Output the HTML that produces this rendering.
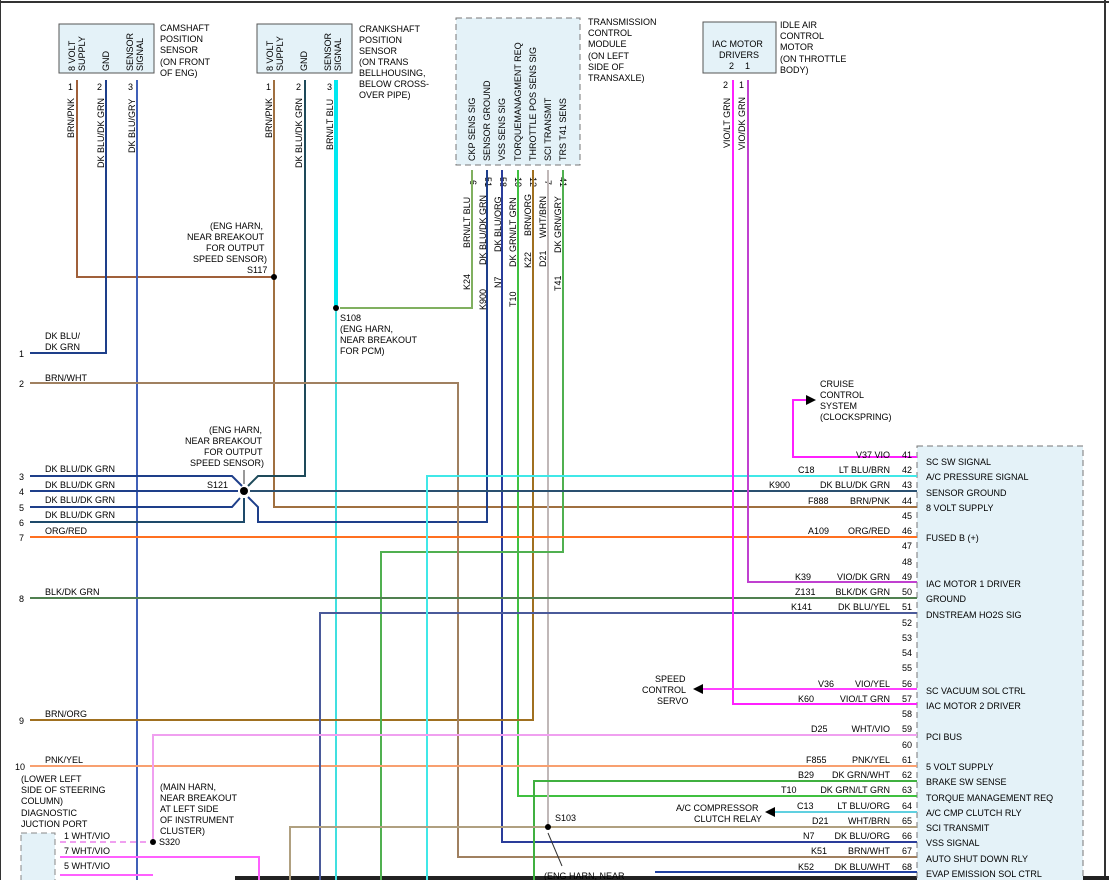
<!DOCTYPE html>
<html><head><meta charset="utf-8"><style>
html,body{margin:0;padding:0;background:#fff;}
svg{display:block;font-family:"Liberation Sans",Arial,sans-serif;font-size:9px;}
</style></head><body>
<svg width="1109" height="880" viewBox="0 0 1109 880" xmlns="http://www.w3.org/2000/svg">
<rect x="0" y="0" width="1109" height="880" fill="#fff"/>
<line x1="0" y1="2" x2="1109" y2="2" stroke="#333" stroke-width="2"/>
<line x1="0.5" y1="0" x2="0.5" y2="880" stroke="#333" stroke-width="1"/>
<line x1="1105" y1="0" x2="1105" y2="880" stroke="#333" stroke-width="2"/>
<rect x="235" y="876" width="874" height="4" fill="#222"/>

<!-- boxes -->
<rect x="59" y="24" width="95" height="49" fill="#e4f2f8" stroke="#555"/>
<rect x="257" y="24" width="95" height="49" fill="#e4f2f8" stroke="#555"/>
<rect x="456" y="18" width="124" height="147" fill="#e4f2f8" stroke="#777" stroke-dasharray="6,4"/>
<rect x="703" y="22" width="73" height="51" fill="#e4f2f8" stroke="#555"/>
<rect x="917" y="446" width="166" height="440" fill="#e4f2f8" stroke="#777" stroke-dasharray="6,4"/>
<rect x="21" y="833" width="34" height="50" fill="#e4f2f8" stroke="#888" stroke-dasharray="6,4"/>

<g fill="#000">
<g transform="translate(75,71) rotate(-90)"><text>8 VOLT</text><text y="10">SUPPLY</text></g>
<g transform="translate(109,71) rotate(-90)"><text>GND</text></g>
<g transform="translate(133,71) rotate(-90)"><text>SENSOR</text><text y="10">SIGNAL</text></g>
<g transform="translate(273,71) rotate(-90)"><text>8 VOLT</text><text y="10">SUPPLY</text></g>
<g transform="translate(307,71) rotate(-90)"><text>GND</text></g>
<g transform="translate(331,71) rotate(-90)"><text>SENSOR</text><text y="10">SIGNAL</text></g>
<g font-size="9">
<text transform="translate(475,161) rotate(-90)">CKP SENS SIG</text>
<text transform="translate(490,161) rotate(-90)">SENSOR GROUND</text>
<text transform="translate(505,161) rotate(-90)">VSS SENS SIG</text>
<text transform="translate(521,161) rotate(-90)">TORQUEMANAGMENT REQ</text>
<text transform="translate(536,161) rotate(-90)">THROTTLE POS SENS SIG</text>
<text transform="translate(551,161) rotate(-90)">SCI TRANSMIT</text>
<text transform="translate(566,161) rotate(-90)">TRS T41 SENS</text>
</g>
<text x="712" y="47">IAC MOTOR</text><text x="719" y="58">DRIVERS</text><text x="729" y="69">2</text><text x="745" y="69">1</text>

<text x="160" y="31">CAMSHAFT</text><text x="160" y="42">POSITION</text><text x="160" y="53">SENSOR</text><text x="160" y="65">(ON FRONT</text><text x="160" y="76">OF ENG)</text>
<text x="359" y="32">CRANKSHAFT</text><text x="359" y="43">POSITION</text><text x="359" y="54">SENSOR</text><text x="359" y="65">(ON TRANS</text><text x="359" y="76">BELLHOUSING,</text><text x="359" y="87">BELOW CROSS-</text><text x="359" y="98">OVER PIPE)</text>
<text x="588" y="25">TRANSMISSION</text><text x="588" y="36">CONTROL</text><text x="588" y="47">MODULE</text><text x="588" y="59">(ON LEFT</text><text x="588" y="70">SIDE OF</text><text x="588" y="81">TRANSAXLE)</text>
<text x="780" y="28">IDLE AIR</text><text x="780" y="39">CONTROL</text><text x="780" y="50">MOTOR</text><text x="780" y="62">(ON THROTTLE</text><text x="780" y="73">BODY)</text>

<text x="68" y="90">1</text><text x="97" y="90">2</text><text x="128" y="90">3</text>
<text x="266" y="90">1</text><text x="296" y="90">2</text><text x="327" y="90">3</text>
<text x="723" y="88">2</text><text x="739" y="88">1</text>
<text transform="translate(74,138) rotate(-90)">BRN/PNK</text>
<text transform="translate(104,168) rotate(-90)">DK BLU/DK GRN</text>
<text transform="translate(135,153) rotate(-90)">DK BLU/GRY</text>
<text transform="translate(272,138) rotate(-90)">BRN/PNK</text>
<text transform="translate(302,168) rotate(-90)">DK BLU/DK GRN</text>
<text transform="translate(333,150) rotate(-90)">BRN/LT BLU</text>
<text transform="translate(730,148) rotate(-90)">VIO/LT GRN</text>
<text transform="translate(745,150) rotate(-90)">VIO/DK GRN</text>

<g font-size="9">
<text transform="translate(470,180) rotate(90)">6</text>
<text transform="translate(485,177) rotate(90)">51</text>
<text transform="translate(500,177) rotate(90)">58</text>
<text transform="translate(515,177) rotate(90)">10</text>
<text transform="translate(530,177) rotate(90)">12</text>
<text transform="translate(545,180) rotate(90)">7</text>
<text transform="translate(560,177) rotate(90)">41</text>
<text transform="translate(470,248) rotate(-90)">BRN/LT BLU</text>
<text transform="translate(486,265) rotate(-90)">DK BLU/DK GRN</text>
<text transform="translate(501,252) rotate(-90)">DK BLU/ORG</text>
<text transform="translate(516,267) rotate(-90)">DK GRN/LT GRN</text>
<text transform="translate(531,236) rotate(-90)">BRN/ORG</text>
<text transform="translate(546,238) rotate(-90)">WHT/BRN</text>
<text transform="translate(561,253) rotate(-90)">DK GRN/GRY</text>
<text transform="translate(470,290) rotate(-90)">K24</text>
<text transform="translate(486,310) rotate(-90)">K900</text>
<text transform="translate(501,288) rotate(-90)">N7</text>
<text transform="translate(516,307) rotate(-90)">T10</text>
<text transform="translate(531,268) rotate(-90)">K22</text>
<text transform="translate(546,267) rotate(-90)">D21</text>
<text transform="translate(561,291) rotate(-90)">T41</text>
</g>

<text x="210" y="229">(ENG HARN,</text><text x="187" y="240">NEAR BREAKOUT</text><text x="206" y="251">FOR OUTPUT</text><text x="193" y="262">SPEED SENSOR)</text><text x="247" y="273">S117</text>
<text x="340" y="321">S108</text><text x="340" y="332">(ENG HARN,</text><text x="340" y="343">NEAR BREAKOUT</text><text x="340" y="354">FOR PCM)</text>
<text x="209" y="433">(ENG HARN,</text><text x="185" y="444">NEAR BREAKOUT</text><text x="204" y="455">FOR OUTPUT</text><text x="190" y="466">SPEED SENSOR)</text><text x="207" y="488">S121</text>
<text x="45" y="339">DK BLU/</text><text x="45" y="350">DK GRN</text>
<text x="45" y="381">BRN/WHT</text>
<text x="45" y="472">DK BLU/DK GRN</text><text x="45" y="488">DK BLU/DK GRN</text><text x="45" y="503">DK BLU/DK GRN</text><text x="45" y="518">DK BLU/DK GRN</text><text x="45" y="534">ORG/RED</text>
<text x="45" y="595">BLK/DK GRN</text><text x="45" y="717">BRN/ORG</text><text x="45" y="763">PNK/YEL</text>
<text x="19" y="357">1</text><text x="19" y="387">2</text><text x="19" y="480">3</text><text x="19" y="495">4</text><text x="19" y="511">5</text><text x="19" y="526">6</text><text x="19" y="541">7</text><text x="19" y="602">8</text><text x="19" y="724">9</text><text x="15" y="770">10</text>
<text x="21" y="782">(LOWER LEFT</text><text x="21" y="793">SIDE OF STEERING</text><text x="21" y="804">COLUMN)</text><text x="21" y="816">DIAGNOSTIC</text><text x="21" y="827">JUCTION PORT</text>
<text x="64" y="839">1  WHT/VIO</text><text x="64" y="854">7  WHT/VIO</text><text x="64" y="869">5  WHT/VIO</text>
<text x="160" y="790">(MAIN HARN,</text><text x="160" y="801">NEAR BREAKOUT</text><text x="160" y="812">AT LEFT SIDE</text><text x="160" y="823">OF INSTRUMENT</text><text x="160" y="834">CLUSTER)</text><text x="159" y="845">S320</text>
<text x="820" y="387">CRUISE</text><text x="820" y="398">CONTROL</text><text x="820" y="409">SYSTEM</text><text x="820" y="420">(CLOCKSPRING)</text>
<text x="655" y="682">SPEED</text><text x="642" y="693">CONTROL</text><text x="657" y="704">SERVO</text>
<text x="676" y="811">A/C COMPRESSOR</text><text x="694" y="822">CLUTCH RELAY</text>
<text x="555" y="821">S103</text>
<text x="544" y="879">(ENG HARN, NEAR</text>
</g>

<g fill="none" stroke-width="2">
<!-- cam -->
<polyline points="77,80 77,277 274,277" stroke="#a0603a"/>
<polyline points="106,80 106,353 30,353" stroke="#1e3f8a"/>
<line x1="137" y1="80" x2="137" y2="880" stroke="#4060b8"/>
<!-- crank -->
<polyline points="274,80 274,507 917,507" stroke="#a07040"/>
<polyline points="305,80 305,476 258,476 248,486" stroke="#1e4a5a"/>
<line x1="336" y1="80" x2="336" y2="308" stroke="#00e8f0" stroke-width="4"/>
<line x1="336" y1="308" x2="336" y2="880" stroke="#40e0e0"/>
<polyline points="340,308 472,308 472,170" stroke="#80b060"/>
<!-- TCM -->
<polyline points="487,170 487,522 258,522 258,507 248,497" stroke="#1e3f8a"/>
<polyline points="502,170 502,842 917,842" stroke="#2a3c9a"/>
<polyline points="518,170 518,796 917,796" stroke="#40c040"/>
<polyline points="533,170 533,720 30,720" stroke="#a07020"/>
<polyline points="548,170 548,827" stroke="#c0b8b8"/>
<polyline points="563,170 563,552 381,552 381,880" stroke="#50b050"/>
<!-- left rows -->
<polyline points="30,383 458,383 458,857 917,857" stroke="#a08060"/>
<polyline points="30,476 232,476 242,486" stroke="#1e3f8a"/>
<polyline points="30,491 238,491" stroke="#1e3f8a"/>
<polyline points="250,491 917,491" stroke="#2a5070"/>
<polyline points="30,507 232,507 240,498" stroke="#1e3f8a"/>
<polyline points="30,522 244,522 244,498" stroke="#1e4a6a"/>
<line x1="30" y1="537" x2="917" y2="537" stroke="#ff7020"/>
<line x1="30" y1="598" x2="917" y2="598" stroke="#508050"/>
<line x1="30" y1="766" x2="917" y2="766" stroke="#f8a070"/>
<polyline points="320,880 320,613 917,613" stroke="#4a5a9a"/>
<polyline points="427,880 427,476 917,476" stroke="#40e8e8"/>
<polyline points="153,842 153,735 917,735" stroke="#f0a0f0"/>
<polyline points="534,880 534,781 917,781" stroke="#40b040"/>
<polyline points="290,880 290,827 917,827" stroke="#b0a080"/>
<line x1="655" y1="872" x2="917" y2="872" stroke="#2040a0"/>
<!-- IAC -->
<polyline points="733,80 733,704 917,704" stroke="#ff20ff"/>
<polyline points="748,80 748,582 917,582" stroke="#c040d0"/>
<polyline points="806,400 793,400 793,457 917,457" stroke="#ff20ff"/>
<line x1="703" y1="689" x2="917" y2="689" stroke="#ff40ff"/>
<line x1="775" y1="812" x2="917" y2="812" stroke="#60d0e0"/>
<line x1="60" y1="842" x2="150" y2="842" stroke="#f0a0f0" stroke-dasharray="6,4"/>
<polyline points="60,857 259,857 259,880" stroke="#ff60ff"/>
<line x1="60" y1="875" x2="153" y2="875" stroke="#ff60ff"/>
</g>
<g fill="#000">
<circle cx="274" cy="277" r="3"/><circle cx="336" cy="308" r="3"/><circle cx="244" cy="491" r="4"/><circle cx="548" cy="827" r="3"/><circle cx="153" cy="842" r="3"/>
<polygon points="816,400 806,395 806,405"/>
<polygon points="693,689 703,684 703,694"/>
<polygon points="765,812 775,807 775,817"/>
</g>
<line x1="244" y1="470" x2="244" y2="484" stroke="#333"/>
<line x1="548" y1="833" x2="562" y2="866" stroke="#333"/>

<!-- ECM labels -->
<g fill="#000" font-size="9">
<text x="912" y="458" text-anchor="end">41</text><text x="912" y="473" text-anchor="end">42</text><text x="912" y="488" text-anchor="end">43</text><text x="912" y="504" text-anchor="end">44</text><text x="912" y="519" text-anchor="end">45</text><text x="912" y="534" text-anchor="end">46</text><text x="912" y="549" text-anchor="end">47</text><text x="912" y="565" text-anchor="end">48</text><text x="912" y="580" text-anchor="end">49</text><text x="912" y="595" text-anchor="end">50</text><text x="912" y="610" text-anchor="end">51</text><text x="912" y="626" text-anchor="end">52</text><text x="912" y="641" text-anchor="end">53</text><text x="912" y="656" text-anchor="end">54</text><text x="912" y="671" text-anchor="end">55</text><text x="912" y="687" text-anchor="end">56</text><text x="912" y="702" text-anchor="end">57</text><text x="912" y="717" text-anchor="end">58</text><text x="912" y="732" text-anchor="end">59</text><text x="912" y="748" text-anchor="end">60</text><text x="912" y="763" text-anchor="end">61</text><text x="912" y="778" text-anchor="end">62</text><text x="912" y="793" text-anchor="end">63</text><text x="912" y="809" text-anchor="end">64</text><text x="912" y="824" text-anchor="end">65</text><text x="912" y="839" text-anchor="end">66</text><text x="912" y="854" text-anchor="end">67</text><text x="912" y="870" text-anchor="end">68</text>
<g text-anchor="end">
<text x="890" y="458">V37  VIO</text><text x="890" y="473">LT BLU/BRN</text><text x="890" y="488">DK BLU/DK GRN</text><text x="890" y="504">BRN/PNK</text><text x="890" y="534">ORG/RED</text><text x="890" y="580">VIO/DK GRN</text><text x="890" y="595">BLK/DK GRN</text><text x="890" y="610">DK BLU/YEL</text><text x="890" y="687">VIO/YEL</text><text x="890" y="702">VIO/LT GRN</text><text x="890" y="732">WHT/VIO</text><text x="890" y="763">PNK/YEL</text><text x="890" y="778">DK GRN/WHT</text><text x="890" y="793">DK GRN/LT GRN</text><text x="890" y="809">LT BLU/ORG</text><text x="890" y="824">WHT/BRN</text><text x="890" y="839">DK BLU/ORG</text><text x="890" y="854">BRN/WHT</text><text x="890" y="870">DK BLU/WHT</text>
</g>
<text x="798" y="473">C18</text><text x="769" y="488">K900</text><text x="808" y="504">F888</text><text x="808" y="534">A109</text><text x="795" y="580">K39</text><text x="795" y="595">Z131</text><text x="791" y="610">K141</text><text x="818" y="687">V36</text><text x="798" y="702">K60</text><text x="811" y="732">D25</text><text x="806" y="763">F855</text><text x="798" y="778">B29</text><text x="781" y="793">T10</text><text x="797" y="809">C13</text><text x="812" y="824">D21</text><text x="803" y="839">N7</text><text x="811" y="854">K51</text><text x="798" y="870">K52</text>
<text x="926" y="465">SC SW SIGNAL</text><text x="926" y="480">A/C PRESSURE SIGNAL</text><text x="926" y="496">SENSOR GROUND</text><text x="926" y="511">8 VOLT SUPPLY</text><text x="926" y="541">FUSED B (+)</text><text x="926" y="587">IAC MOTOR 1 DRIVER</text><text x="926" y="602">GROUND</text><text x="926" y="618">DNSTREAM HO2S SIG</text><text x="926" y="694">SC VACUUM SOL CTRL</text><text x="926" y="709">IAC MOTOR 2 DRIVER</text><text x="926" y="740">PCI BUS</text><text x="926" y="770">5 VOLT SUPPLY</text><text x="926" y="785">BRAKE SW SENSE</text><text x="926" y="801">TORQUE MANAGEMENT REQ</text><text x="926" y="816">A/C CMP CLUTCH RLY</text><text x="926" y="831">SCI TRANSMIT</text><text x="926" y="846">VSS SIGNAL</text><text x="926" y="862">AUTO SHUT DOWN RLY</text><text x="926" y="877">EVAP EMISSION SOL CTRL</text>
</g>
</svg>
</body></html>
